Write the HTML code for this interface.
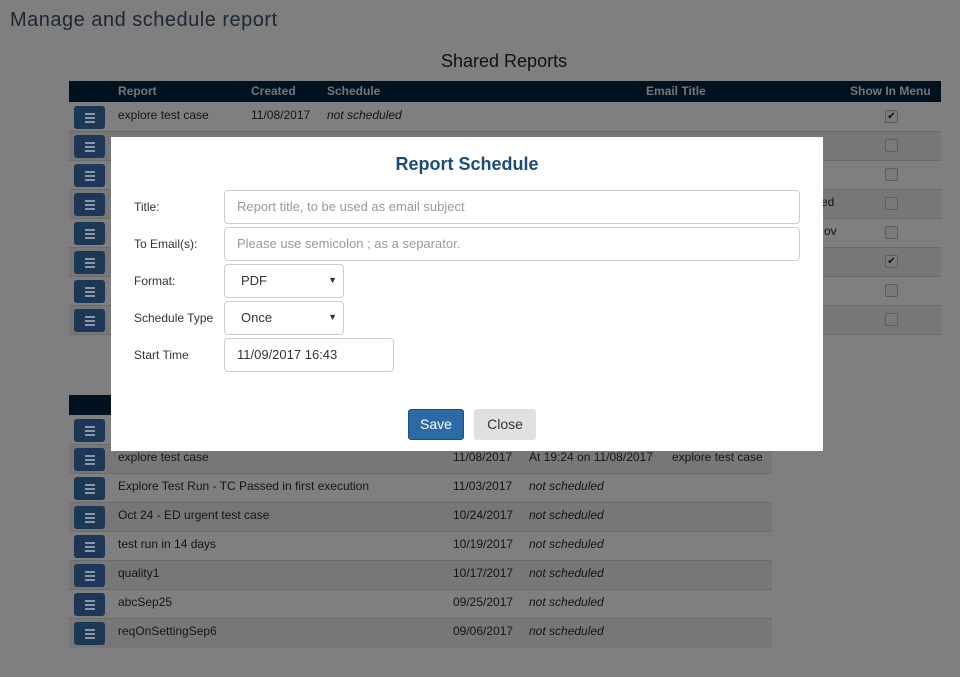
<!DOCTYPE html>
<html><head><meta charset="utf-8"><style>
*{box-sizing:border-box;margin:0;padding:0}
body{width:960px;height:677px;background:#7f7f7f;font-family:"Liberation Sans",sans-serif;position:relative;overflow:hidden;color:#151515;font-size:12px}
.a{position:absolute;white-space:nowrap}
.hdr{position:absolute;background:#00111f;color:#6f7780;font-weight:bold;font-size:12px}
.row{position:absolute;height:29px;border-bottom:1px solid #6c6c6c}
.dk{background:#777}
.mb{position:absolute;left:5px;top:3px;width:31px;height:23px;background:#1c3856;border-radius:3px}
.mb i{position:absolute;left:11px;width:10px;height:2px;background:#8a96a3}
.cb{position:absolute;width:13px;height:13px;border:1px solid #5d5d5d;border-radius:2px;background:#7a7a7a;font-size:10px;line-height:11px;text-align:center;color:#111}
.it{font-style:italic}
.dlg{position:absolute;left:111px;top:137px;width:712px;height:314px;background:#fff}
.inp{position:absolute;border:1px solid #ccc;border-radius:4px;background:#fff;font-size:13px;color:#999;padding-left:12px;line-height:31px}
.lbl{position:absolute;font-size:12px;color:#333}
</style></head><body>
<div class="a" style="left:10px;top:9px;font-size:20px;letter-spacing:0.5px;color:#1d2633">Manage and schedule report</div>
<div class="a" style="left:441px;top:51px;font-size:18px;color:#111">Shared Reports</div>

<div class="hdr" style="left:69px;top:81px;width:872px;height:21px">
<span class="a" style="left:49px;top:3px">Report</span><span class="a" style="left:182px;top:3px">Created</span><span class="a" style="left:258px;top:3px">Schedule</span><span class="a" style="left:577px;top:3px">Email Title</span><span class="a" style="left:781px;top:3px">Show In Menu</span></div>

<div style="position:absolute;left:69px;top:103px;width:872px">
<div class="row" style="top:0;width:872px"><div class="mb"><i style="top:7px"></i><i style="top:11px"></i><i style="top:15px"></i></div><span class="a" style="left:49px;top:5px">explore test case</span><span class="a" style="left:182px;top:5px">11/08/2017</span><span class="a it" style="left:258px;top:5px">not scheduled</span><div class="cb" style="left:816px;top:7px">✔</div></div>
<div class="row dk" style="top:29px;width:872px"><div class="mb"><i style="top:7px"></i><i style="top:11px"></i><i style="top:15px"></i></div><div class="cb" style="left:816px;top:7px"></div></div>
<div class="row" style="top:58px;width:872px"><div class="mb"><i style="top:7px"></i><i style="top:11px"></i><i style="top:15px"></i></div><div class="cb" style="left:816px;top:7px"></div></div>
<div class="row dk" style="top:87px;width:872px"><div class="mb"><i style="top:7px"></i><i style="top:11px"></i><i style="top:15px"></i></div><span class="a" style="left:752px;top:5px">ed</span><div class="cb" style="left:816px;top:7px"></div></div>
<div class="row" style="top:116px;width:872px"><div class="mb"><i style="top:7px"></i><i style="top:11px"></i><i style="top:15px"></i></div><span class="a" style="left:755px;top:5px">ov</span><div class="cb" style="left:816px;top:7px"></div></div>
<div class="row dk" style="top:145px;width:872px"><div class="mb"><i style="top:7px"></i><i style="top:11px"></i><i style="top:15px"></i></div><div class="cb" style="left:816px;top:7px">✔</div></div>
<div class="row" style="top:174px;width:872px"><div class="mb"><i style="top:7px"></i><i style="top:11px"></i><i style="top:15px"></i></div><div class="cb" style="left:816px;top:7px"></div></div>
<div class="row dk" style="top:203px;width:872px"><div class="mb"><i style="top:7px"></i><i style="top:11px"></i><i style="top:15px"></i></div><div class="cb" style="left:816px;top:7px"></div></div>
</div>

<div class="hdr" style="left:69px;top:395px;width:703px;height:20px"></div>
<div style="position:absolute;left:69px;top:416px;width:703px">
<div class="row" style="top:0;width:703px"><div class="mb"><i style="top:7px"></i><i style="top:11px"></i><i style="top:15px"></i></div></div>
<div class="row dk" style="top:29px;width:703px"><div class="mb"><i style="top:7px"></i><i style="top:11px"></i><i style="top:15px"></i></div><span class="a" style="left:49px;top:5px">explore test case</span><span class="a" style="left:384px;top:5px">11/08/2017</span><span class="a" style="left:460px;top:5px">At 19:24 on 11/08/2017</span><span class="a" style="left:603px;top:5px">explore test case</span></div>
<div class="row" style="top:58px;width:703px"><div class="mb"><i style="top:7px"></i><i style="top:11px"></i><i style="top:15px"></i></div><span class="a" style="left:49px;top:5px">Explore Test Run - TC Passed in first execution</span><span class="a" style="left:384px;top:5px">11/03/2017</span><span class="a it" style="left:460px;top:5px">not scheduled</span></div>
<div class="row dk" style="top:87px;width:703px"><div class="mb"><i style="top:7px"></i><i style="top:11px"></i><i style="top:15px"></i></div><span class="a" style="left:49px;top:5px">Oct 24 - ED urgent test case</span><span class="a" style="left:384px;top:5px">10/24/2017</span><span class="a it" style="left:460px;top:5px">not scheduled</span></div>
<div class="row" style="top:116px;width:703px"><div class="mb"><i style="top:7px"></i><i style="top:11px"></i><i style="top:15px"></i></div><span class="a" style="left:49px;top:5px">test run in 14 days</span><span class="a" style="left:384px;top:5px">10/19/2017</span><span class="a it" style="left:460px;top:5px">not scheduled</span></div>
<div class="row dk" style="top:145px;width:703px"><div class="mb"><i style="top:7px"></i><i style="top:11px"></i><i style="top:15px"></i></div><span class="a" style="left:49px;top:5px">quality1</span><span class="a" style="left:384px;top:5px">10/17/2017</span><span class="a it" style="left:460px;top:5px">not scheduled</span></div>
<div class="row" style="top:174px;width:703px"><div class="mb"><i style="top:7px"></i><i style="top:11px"></i><i style="top:15px"></i></div><span class="a" style="left:49px;top:5px">abcSep25</span><span class="a" style="left:384px;top:5px">09/25/2017</span><span class="a it" style="left:460px;top:5px">not scheduled</span></div>
<div class="row dk" style="top:203px;width:703px;border-bottom:none"><div class="mb"><i style="top:7px"></i><i style="top:11px"></i><i style="top:15px"></i></div><span class="a" style="left:49px;top:5px">reqOnSettingSep6</span><span class="a" style="left:384px;top:5px">09/06/2017</span><span class="a it" style="left:460px;top:5px">not scheduled</span></div>
</div>

<div class="dlg">
<div class="a" style="left:0;width:712px;text-align:center;top:17px;font-size:18px;font-weight:bold;color:#1a4c78">Report Schedule</div>
<div class="lbl" style="left:23px;top:63px">Title:</div>
<div class="inp" style="left:113px;top:53px;width:576px;height:34px">Report title, to be used as email subject</div>
<div class="lbl" style="left:23px;top:100px">To Email(s):</div>
<div class="inp" style="left:113px;top:90px;width:576px;height:34px">Please use semicolon ; as a separator.</div>
<div class="lbl" style="left:23px;top:137px">Format:</div>
<div class="inp" style="left:113px;top:127px;width:120px;height:34px;color:#333;padding-left:16px">PDF<span class="a" style="right:6px;top:0;font-size:9px">▼</span></div>
<div class="lbl" style="left:23px;top:174px">Schedule Type</div>
<div class="inp" style="left:113px;top:164px;width:120px;height:34px;color:#333;padding-left:16px">Once<span class="a" style="right:6px;top:0;font-size:9px">▼</span></div>
<div class="lbl" style="left:23px;top:211px">Start Time</div>
<div class="inp" style="left:113px;top:201px;width:170px;height:34px;color:#333">11/09/2017 16:43</div>
<div class="a" style="left:297px;top:272px;width:56px;height:31px;background:#2b6aa5;border:1px solid #1f4f7e;border-radius:3px;color:#fff;font-size:14px;text-align:center;line-height:29px">Save</div>
<div class="a" style="left:363px;top:272px;width:62px;height:31px;background:#e0e0e0;border-radius:3px;color:#333;font-size:14px;text-align:center;line-height:31px">Close</div>
</div>
</body></html>
